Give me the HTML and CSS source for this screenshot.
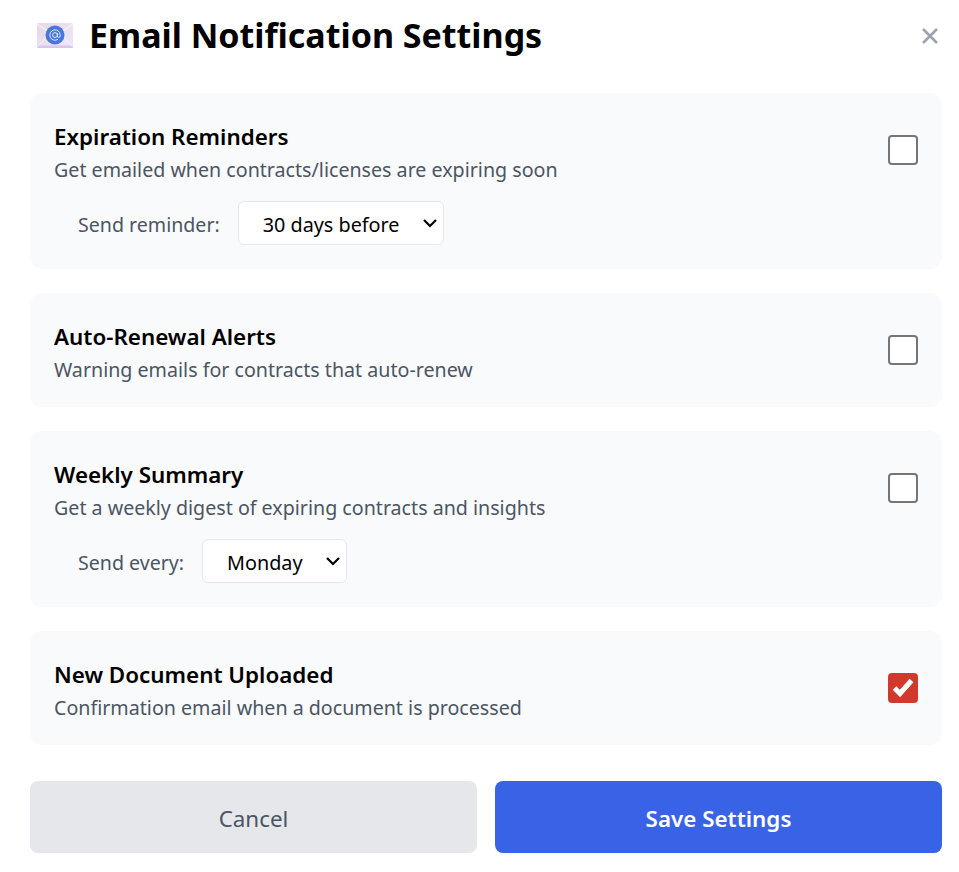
FILE: index.html
```html
<!DOCTYPE html>
<html lang="en">
<head>
    <meta charset="UTF-8">
    <title>Email Notification Settings</title>
    <link rel="stylesheet" href="styles.css">
</head>
<body>
    <div class="modal">
        <div class="modal-header">
            <h2>
                <svg class="mail-icon" width="38" height="28" viewBox="0 0 38 28">
                    <defs>
                        <linearGradient id="mailFill" x1="0" y1="0" x2="1" y2="1">
                            <stop offset="0" stop-color="#e6d8e4"/>
                            <stop offset="1" stop-color="#efe8f8"/>
                        </linearGradient>
                    </defs>
                    <rect x="1" y="2" width="36" height="25" rx="1.5" fill="url(#mailFill)"/>
                    <rect x="1" y="24.5" width="36" height="2.5" fill="#d9c6f0"/>
                    <path d="M1 3 L19 15 L37 3" fill="none" stroke="#f6f1f9" stroke-width="1.5"/>
                    <path d="M1 26 L14 13 M37 26 L24 13" stroke="#f6f1f9" stroke-width="1"/>
                    <circle cx="19" cy="14" r="9.5" fill="#4a78d8"/>
                    <circle cx="19" cy="14" r="2.4" fill="none" stroke="#dfe8fb" stroke-width="1"/>
                    <path d="M21.4 12 V15 a1.4 1.4 0 0 0 2.8 0 V14 a5.2 5.2 0 1 0 -2.2 4.3" fill="none" stroke="#dfe8fb" stroke-width="1"/>
                </svg>
                Email Notification Settings
            </h2>
            <button class="close-btn" aria-label="Close">
                <svg width="16" height="16" viewBox="0 0 16 16"><path d="M1 1 L15 15 M15 1 L1 15" stroke="#9ca3af" stroke-width="2.6"/></svg>
            </button>
        </div>

        <div class="setting">
            <div class="setting-top">
                <div class="setting-text">
                    <div class="setting-title">Expiration Reminders</div>
                    <div class="setting-desc">Get emailed when contracts/licenses are expiring soon</div>
                </div>
                <input type="checkbox" class="toggle">
            </div>
            <div class="setting-extra">
                <label>Send reminder:</label>
                <select>
                    <option>30 days before</option>
                    <option>14 days before</option>
                    <option>7 days before</option>
                </select>
            </div>
        </div>

        <div class="setting">
            <div class="setting-top">
                <div class="setting-text">
                    <div class="setting-title">Auto-Renewal Alerts</div>
                    <div class="setting-desc">Warning emails for contracts that auto-renew</div>
                </div>
                <input type="checkbox" class="toggle">
            </div>
        </div>

        <div class="setting">
            <div class="setting-top">
                <div class="setting-text">
                    <div class="setting-title">Weekly Summary</div>
                    <div class="setting-desc">Get a weekly digest of expiring contracts and insights</div>
                </div>
                <input type="checkbox" class="toggle">
            </div>
            <div class="setting-extra">
                <label>Send every:</label>
                <select>
                    <option>Monday</option>
                    <option>Friday</option>
                </select>
            </div>
        </div>

        <div class="setting">
            <div class="setting-top">
                <div class="setting-text">
                    <div class="setting-title">New Document Uploaded</div>
                    <div class="setting-desc">Confirmation email when a document is processed</div>
                </div>
                <input type="checkbox" class="toggle" checked>
            </div>
        </div>

        <div class="actions">
            <button class="btn btn-cancel">Cancel</button>
            <button class="btn btn-save">Save Settings</button>
        </div>
    </div>
</body>
</html>
```

FILE: styles.css
```css
body {
    font-family: "Noto Sans", Arial, sans-serif;
    margin: 0;
    background-color: white;
    color: black;
}
.modal {
    width: 912px;
    padding: 0 17px 19px 30px;
}
.modal-header {
    display: flex;
    justify-content: space-between;
    align-items: center;
    height: 72px;
    margin-bottom: 21px;
}
.modal-header h2 {
    display: flex;
    align-items: center;
    gap: 15px;
    margin: -2px 0 0 6px;
    font-size: 34px;
    font-weight: 700;
}
.close-btn {
    display: flex;
    background: none;
    border: none;
    padding: 0;
    margin-right: 4px;
    cursor: pointer;
}
.setting {
    background-color: #f9fafb;
    border-radius: 12px;
    padding: 24px;
    margin-bottom: 24px;
}
.setting-top {
    display: flex;
    justify-content: space-between;
    align-items: center;
    height: 66px;
}
.setting-text {
    height: 66px;
    box-sizing: border-box;
    padding-top: 3px;
}
.setting-title {
    font-size: 22.4px;
    font-weight: 600;
    line-height: 33px;
}
.setting-desc {
    font-size: 19.65px;
    color: #4b5563;
    line-height: 33px;
}
.toggle {
    appearance: none;
    box-sizing: border-box;
    width: 30px;
    height: 30px;
    margin: 0;
    background-color: white;
    border: 2px solid #767676;
    border-radius: 4px;
}
.toggle:checked {
    border: none;
    background: #d0392b url("data:image/svg+xml,%3Csvg xmlns='http://www.w3.org/2000/svg' viewBox='0 0 30 30'%3E%3Cpath d='M6.5 15 L12 20.5 L23.5 7.5' fill='none' stroke='white' stroke-width='5'/%3E%3C/svg%3E") center no-repeat;
}
.setting-extra {
    display: flex;
    align-items: center;
    gap: 18px;
    margin-top: 18px;
    padding-left: 24px;
    font-size: 19.6px;
    color: #4b5563;
}
.setting-extra label {
    padding-top: 2px;
}
.setting-extra select {
    appearance: none;
    font-family: inherit;
    font-size: 19.8px;
    height: 44px;
    padding: 2px 43px 0 24px;
    background: white url("data:image/svg+xml,%3Csvg xmlns='http://www.w3.org/2000/svg' viewBox='0 0 16 16'%3E%3Cpath d='M2 5 L8 11 L14 5' fill='none' stroke='black' stroke-width='2.2'/%3E%3C/svg%3E") right 5px center / 16px 16px no-repeat;
    color: black;
    border: 1px solid #e5e7eb;
    border-radius: 6px;
}
.actions {
    display: flex;
    gap: 18px;
    margin-top: 36px;
}
.btn {
    flex: 1;
    height: 72px;
    padding: 2px 0 0;
    border: none;
    border-radius: 8px;
    font-family: inherit;
    font-size: 22.4px;
    cursor: pointer;
}
.btn-cancel {
    background-color: #e5e7eb;
    color: #4b5563;
}
.btn-save {
    background-color: #3863e6;
    color: white;
    font-weight: 600;
}
```
